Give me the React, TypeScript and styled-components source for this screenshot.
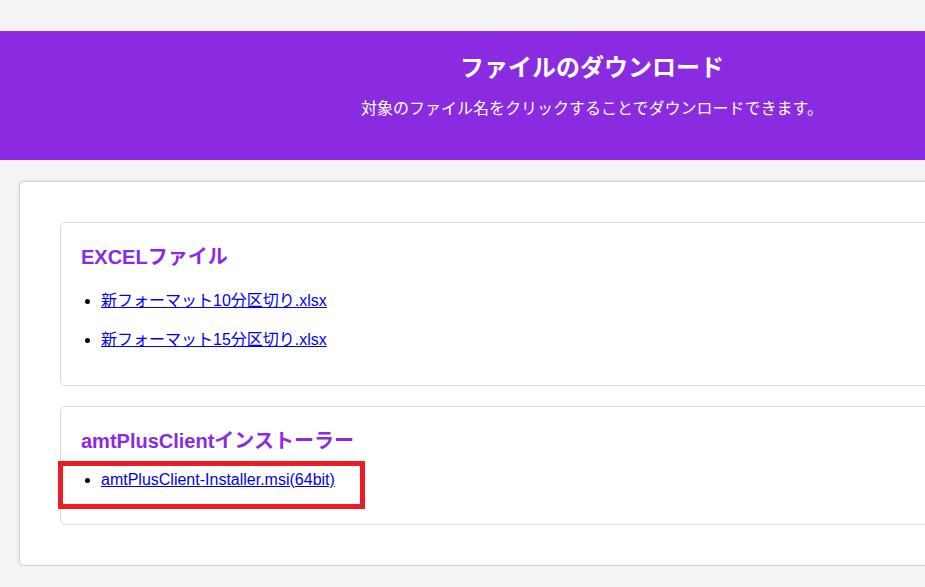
import React from "react";
import styled, { createGlobalStyle } from "styled-components";

const GlobalStyle = createGlobalStyle`
  html, body {
    margin: 0;
    padding: 0;
    background: #f4f4f4;
    font-family: "Liberation Sans", "Noto Sans CJK JP", sans-serif;
    overflow: hidden;
  }
`;

const Page = styled.div`
  width: 1184px;
  padding-top: 31px;
`;

const Header = styled.header`
  background: #8a2be2;
  color: #ffffff;
  text-align: center;
  padding: 23px 0 40px;
`;

const Title = styled.h1`
  margin: 0;
  font-size: 24px;
  line-height: 28px;
  font-weight: bold;
`;

const Subtitle = styled.p`
  margin: 16px 0 0;
  font-size: 16px;
  line-height: 22px;
`;

const Main = styled.main`
  margin: 21px 19px 0;
  background: #ffffff;
  border: 1px solid #cfcfcf;
  border-radius: 5px;
  box-shadow: 0 0 4px rgba(0, 0, 0, 0.08);
  padding: 40px;
`;

const Section = styled.section`
  position: relative;
  border: 1px solid #dddddd;
  border-radius: 5px;
  padding: 18px 20px 20px;
  & + & {
    margin-top: 20px;
  }
`;

const SectionTitle = styled.h3`
  margin: 0;
  font-size: 20px;
  line-height: normal;
  font-weight: bold;
  color: #8a2be2;
`;

const FileList = styled.ul`
  margin: 17px 0 0;
  padding-left: 20px;
`;

const FileItem = styled.li`
  font-size: 16px;
  line-height: normal;
  color: #000000;
  margin-bottom: 15px;
`;

const FileLink = styled.a`
  color: #0000ee;
  text-decoration: underline;
`;

const Highlight = styled.div`
  position: absolute;
  left: -3px;
  top: 54px;
  width: 307px;
  height: 48px;
  box-sizing: border-box;
  border: 5px solid #ed1c24;
  pointer-events: none;
`;

const sections = [
  {
    title: "EXCELファイル",
    files: ["新フォーマット10分区切り.xlsx", "新フォーマット15分区切り.xlsx"],
    highlight: false,
  },
  {
    title: "amtPlusClientインストーラー",
    files: ["amtPlusClient-Installer.msi(64bit)"],
    highlight: true,
  },
];

export default function App() {
  return (
    <>
      <GlobalStyle />
      <Page>
        <Header>
          <Title>ファイルのダウンロード</Title>
          <Subtitle>対象のファイル名をクリックすることでダウンロードできます。</Subtitle>
        </Header>
        <Main>
          {sections.map((s) => (
            <Section key={s.title}>
              <SectionTitle>{s.title}</SectionTitle>
              <FileList>
                {s.files.map((f) => (
                  <FileItem key={f}>
                    <FileLink href="#">{f}</FileLink>
                  </FileItem>
                ))}
              </FileList>
              {s.highlight && <Highlight />}
            </Section>
          ))}
        </Main>
      </Page>
    </>
  );
}
